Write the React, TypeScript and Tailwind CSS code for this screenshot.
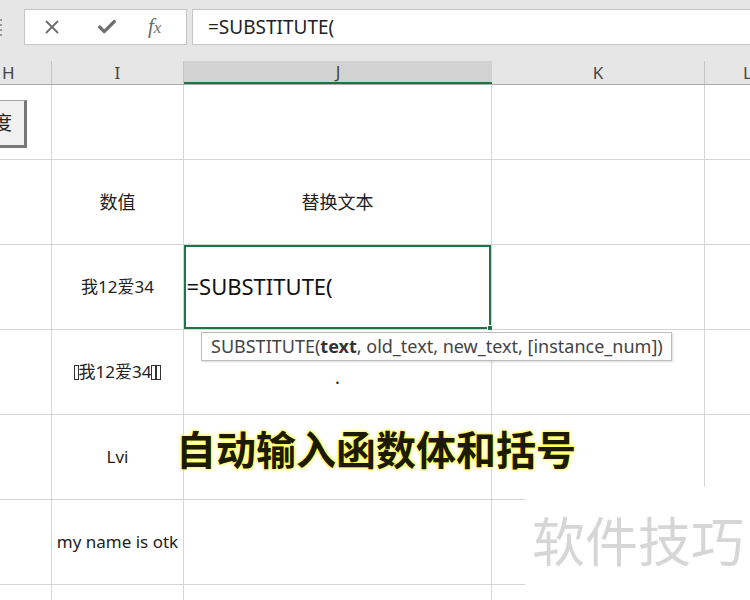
import { X, Check } from "lucide-react";

const line = "border-[#d4d4d4]";
const cjk = "font-['Noto_Sans','Noto_Sans_CJK_SC',sans-serif]";

function Tofu() {
  return <span className="inline-block w-[5px] h-[15px] border border-[#333] align-[-1px]" />;
}

function Row({ h, i, j, k, tall = 85 }: { h?: React.ReactNode; i?: React.ReactNode; j?: React.ReactNode; k?: React.ReactNode; tall?: number }) {
  return (
    <div className="flex" style={{ height: tall }}>
      <div className={`w-[52px] shrink-0 border-r border-b ${line}`}>{h}</div>
      <div className={`w-[132px] shrink-0 border-r border-b ${line} flex items-center justify-center text-[17px] text-[#222]`}>{i}</div>
      <div className={`w-[308px] shrink-0 border-r border-b ${line} flex items-center justify-center text-[18px] text-[#222]`}>{j}</div>
      <div className={`w-[213px] shrink-0 border-r border-b ${line}`}>{k}</div>
      <div className={`flex-1 border-b ${line}`} />
    </div>
  );
}

export default function App() {
  return (
    <div className={`relative w-[750px] h-[600px] overflow-hidden bg-white ${cjk}`}>
      {/* formula bar */}
      <div className="h-[61px] bg-[#e6e6e6] flex items-start pt-[9px]">
        <div className="w-[24px] h-[36px] flex flex-col justify-center gap-[3px]">
          <span className="w-[2px] h-[2px] bg-[#999]" />
          <span className="w-[2px] h-[2px] bg-[#999]" />
          <span className="w-[2px] h-[2px] bg-[#999]" />
          <span className="w-[2px] h-[2px] bg-[#999]" />
        </div>
        <div className="w-[163px] h-[36px] bg-white border border-[#c6c6c6] flex items-center">
          <X className="ml-[16px]" size={22} strokeWidth={2} color="#6e6e6e" />
          <Check className="ml-[33px]" size={22} strokeWidth={3.5} color="#6e6e6e" />
          <span className="ml-[30px] font-['Liberation_Serif',serif] italic text-[21px] text-[#6e6e6e]">
            f<span className="text-[17px]">x</span>
          </span>
        </div>
        <div className="ml-[5px] flex-1 h-[36px] bg-white border border-r-0 border-[#c6c6c6] flex items-center pl-[15px] text-[19px] text-[#222]">
          =SUBSTITUTE(
        </div>
      </div>

      {/* column headers */}
      <div className="flex h-[24px] bg-[#e6e6e6] text-[17px] text-[#444] border-b border-[#ababab]">
        <div className="w-[52px] shrink-0 border-r border-[#c6c6c6] flex items-center pl-[2px]">H</div>
        <div className="w-[132px] shrink-0 border-r border-[#c6c6c6] flex items-center justify-center">I</div>
        <div className="w-[308px] shrink-0 bg-[#d2d2d2] border-b-2 border-[#217346] flex items-center justify-center">J</div>
        <div className="w-[213px] shrink-0 border-r border-[#c6c6c6] flex items-center justify-center">K</div>
        <div className="flex-1 flex items-center pl-[38px]">L</div>
      </div>

      {/* rows */}
      <Row tall={75} />
      <Row i={<span className="text-[18px]">数值</span>} j="替换文本" />
      <Row
        i="我12爱34"
        j={
          <div className="w-full h-full -ml-px -mt-px border-2 border-[#217346] flex items-center pl-[1px] text-[22px] text-[#111] relative">
            =SUBSTITUTE(
            <span className="absolute right-[-4px] bottom-[-4px] w-[6px] h-[6px] bg-[#217346] border border-white" />
          </div>
        }
      />
      <Row
        i={
          <span className="flex items-center">
            <Tofu />我12爱34<Tofu /><Tofu />
          </span>
        }
        j={<span className="mt-[10px]">.</span>}
      />
      <Row i="Lvi" />
      <Row i="my name is otk" />
      <Row tall={40} />

      {/* form button partly visible */}
      <div className="absolute left-[-30px] top-[100px] w-[57px] h-[48px] bg-[#f0f0f0] border border-[#a0a0a0] border-r-[3px] border-b-[3px] border-r-[#777] border-b-[#777] flex items-center justify-end pr-[12px] text-[19px] text-[#222]">
        度
      </div>

      {/* function tooltip */}
      <div className="absolute left-[201px] top-[332px] w-[471px] h-[29px] bg-white border border-[#bcbcbc] shadow-[1px_1px_2px_rgba(0,0,0,0.15)] flex items-center pl-[9px] text-[18px] text-[#444] whitespace-nowrap">
        SUBSTITUTE(<b className="text-[#333]">text</b>, old_text, new_text, [instance_num])
      </div>

      {/* caption */}
      <div className="absolute left-[176px] top-[424px] text-[40px] font-bold leading-[52px] text-[#1c1a00] whitespace-nowrap [text-shadow:0_0_2px_#ffff33,0_0_3px_#ffff33,0_0_4px_#ffff66]">
        自动输入函数体和括号
      </div>

      {/* watermark */}
      <div className="absolute left-[525px] top-[487px] right-0 bottom-0 bg-white flex items-start pl-[7px] pt-[20px]">
        <span className="text-[53px] leading-[70px] text-[#d6d6d6] whitespace-nowrap">软件技巧</span>
      </div>
    </div>
  );
}
